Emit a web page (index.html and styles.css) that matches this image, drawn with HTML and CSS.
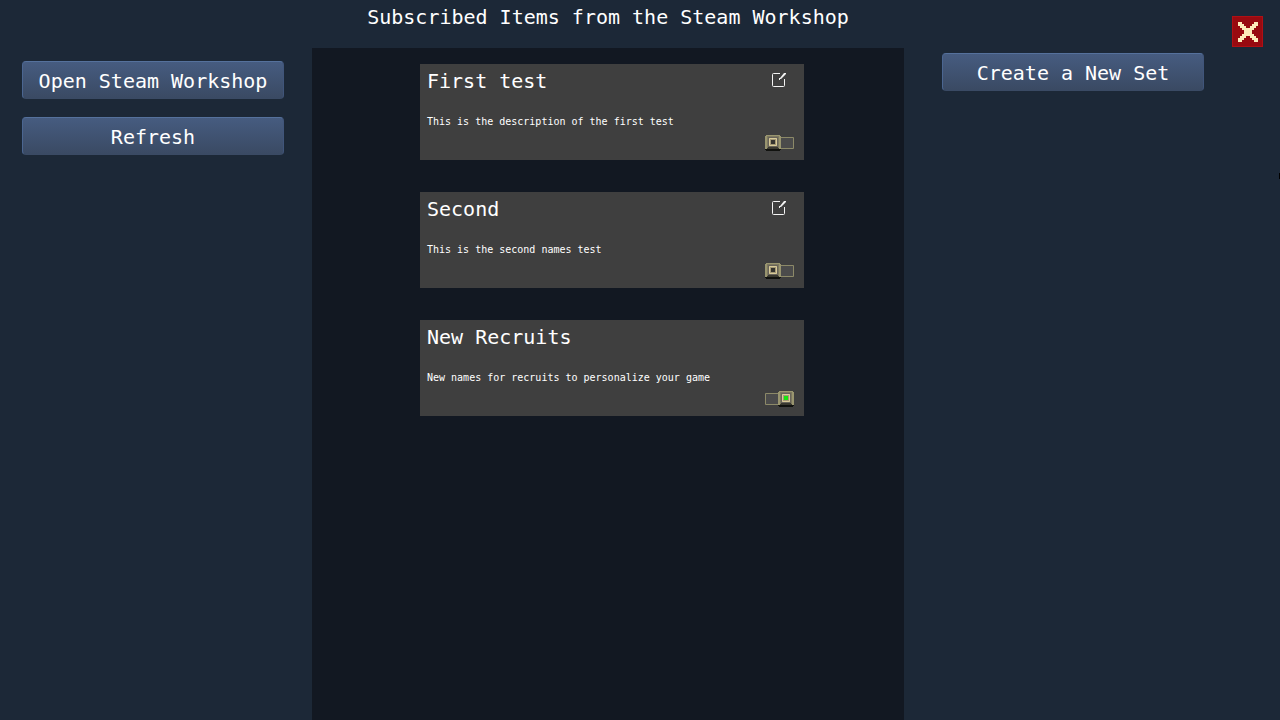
FILE: index.html
```html
<!DOCTYPE html>
<html lang="en">
<head>
<meta charset="utf-8">
<title>Subscribed Items from the Steam Workshop</title>
<link rel="stylesheet" href="styles.css">
</head>
<body>
<svg width="0" height="0" class="defs" aria-hidden="true">
  <symbol id="edit" viewBox="0 0 16 16">
    <path d="M9 1.500H2.500Q1.500 1.500 1.500 2.500V13.500Q1.500 14.500 2.500 14.500H12.500Q13.500 14.500 13.500 13.500V7" fill="none" stroke="#f4f4f4"/>
    <path d="M13 1h2v1l-5 5h-1v1H8V6h1z" fill="#f4f4f4"/>
  </symbol>
  <symbol id="knob" viewBox="0 0 16 16">
    <path d="M0 12h16v3h-1v1H1v-1H0z" fill="#11120f"/>
    <path d="M1 0h14v1h1v13h-2v-1H2v1H0V1h1z" fill="#99956f"/>
    <path d="M2 1h12v12H2z" fill="#7d785f"/>
    <path d="M3 2h10v10H3z" fill="#68645a"/>
    <path d="M4 3h8v8H4z" fill="#a39876"/>
    <path d="M4.500 3.500h7v7h-7z" fill="none" stroke="#d9cb98"/>
    <path d="M3 12h10v1h1v1H2v-1h1z" fill="#39382f"/>
  </symbol>
</svg>
<div class="screen">
  <aside class="side side-left">
    <button class="btn" type="button">Open Steam Workshop</button>
    <button class="btn" type="button">Refresh</button>
  </aside>
  <main class="center">
    <h1 class="title">Subscribed Items from the Steam Workshop</h1>
    <div class="list">
      <article class="card">
        <div class="card-head">
          <h2 class="name">First test</h2>
          <button class="edit" type="button" aria-label="Edit First test"><svg class="edit-icon"><use href="#edit"/></svg></button>
        </div>
        <p class="desc">This is the description of the first test</p>
        <label class="toggle">
          <input class="toggle-input" type="checkbox" aria-label="Enable First test">
          <svg class="toggle-art" viewBox="0 0 30 16"><path d="M15 2.500H28.500V13.500H15" fill="#4b4b4b" stroke="#8c8968"/><use href="#knob" width="16" height="16"/><path d="M6 5h4v4H6z" fill="#35342f"/></svg>
        </label>
      </article>
      <article class="card">
        <div class="card-head">
          <h2 class="name">Second</h2>
          <button class="edit" type="button" aria-label="Edit Second"><svg class="edit-icon"><use href="#edit"/></svg></button>
        </div>
        <p class="desc">This is the second names test</p>
        <label class="toggle">
          <input class="toggle-input" type="checkbox" aria-label="Enable Second">
          <svg class="toggle-art" viewBox="0 0 30 16"><path d="M15 2.500H28.500V13.500H15" fill="#4b4b4b" stroke="#8c8968"/><use href="#knob" width="16" height="16"/><path d="M6 5h4v4H6z" fill="#35342f"/></svg>
        </label>
      </article>
      <article class="card">
        <div class="card-head">
          <h2 class="name">New Recruits</h2>
        </div>
        <p class="desc">New names for recruits to personalize your game</p>
        <label class="toggle">
          <input class="toggle-input" type="checkbox" checked aria-label="Enable New Recruits">
          <svg class="toggle-art" viewBox="0 0 30 16"><path d="M14 2.500H.5V13.500H14" fill="#4b4b4b" stroke="#8c8968"/><use href="#knob" x="13" width="16" height="16"/><path d="M19 5h4v4h-4z" fill="#16e60f"/></svg>
        </label>
      </article>
    </div>
  </main>
  <aside class="side side-right">
    <button class="btn" type="button">Create a New Set</button>
    <button class="close" type="button" aria-label="Close">
      <svg class="close-icon" viewBox="0 0 10 10" shape-rendering="crispEdges"><path d="M0 0h2v1h1v1h1v1h2V2h1V1h1V0h2v2H9v1H8v1H7v2h1v1h1v1h1v2H8V9H7V8H6V7H4v1H3v1H2v1H0V8h1V7h1V6h1V4H2V3H1V2H0z" fill="#fdecba"/></svg>
    </button>
  </aside>
</div>
</body>
</html>
```
FILE: styles.css
```css
* { box-sizing: border-box; }
body {
  margin: 0;
  background: #1c2837;
  color: #fff;
  font-family: "DejaVu Sans Mono", monospace;
}
.defs { position: absolute; }
.screen {
  position: relative;
  display: grid;
  grid-template-columns: 39fr 74fr 47fr;
  min-height: 100vh;
}
.screen::after {
  content: "";
  position: absolute;
  right: 0;
  top: 173px;
  width: 1px;
  height: 6px;
  background: #000;
}
.side { display: flex; }
.side-left {
  flex-direction: column;
  gap: 18px;
  padding: 61px 28px 0 22px;
}
.side-right {
  align-items: flex-start;
  justify-content: space-between;
  gap: 28px;
  padding: 16px 17px 0 38px;
}
.btn {
  height: 38px;
  padding: 2px 0 0;
  border: 1px solid;
  border-color: #55719c #40557a #3a4a64 #4b6691;
  border-radius: 4px;
  background: linear-gradient(#465c80, #3a4a63);
  color: #fff;
  font: 20px/24px "DejaVu Sans Mono", monospace;
  white-space: nowrap;
  cursor: pointer;
}
.side-right .btn {
  flex: 0 1 262px;
  margin-top: 37px;
}
.close {
  display: grid;
  place-items: center;
  width: 31px;
  height: 31px;
  padding: 0;
  border: 1px solid #b00f14;
  background: #980a10;
  cursor: pointer;
}
.close-icon { width: 20px; height: 20px; }
.center {
  display: flex;
  flex-direction: column;
}
.title {
  display: flex;
  justify-content: center;
  height: 48px;
  margin: 0;
  padding-top: 5px;
  font-size: 20px;
  line-height: 24px;
  font-weight: 400;
  white-space: nowrap;
}
.list {
  flex: 1;
  display: flex;
  flex-direction: column;
  align-items: center;
  gap: 32px;
  padding: 16px 0 16px 8px;
  background: #121822;
}
.card {
  display: flex;
  flex-direction: column;
  width: 100%;
  max-width: 384px;
  min-height: 96px;
  padding: 5px 9px 9px 7px;
  background: #3f3f3f;
}
.card-head {
  display: flex;
  justify-content: space-between;
  padding-right: 8px;
}
.name {
  margin: 0;
  font-size: 20px;
  line-height: 24px;
  font-weight: 400;
}
.edit {
  height: 24px;
  padding: 3px 0 5px;
  border: 0;
  background: none;
  cursor: pointer;
}
.edit-icon { display: block; width: 16px; height: 16px; }
.desc {
  margin: 22px 0 5px;
  font-size: 10px;
  line-height: 14px;
}
.toggle {
  position: relative;
  align-self: flex-end;
  width: 30px;
  height: 16px;
  margin-top: auto;
}
.toggle-input {
  position: absolute;
  inset: 0;
  width: 100%;
  height: 100%;
  margin: 0;
  opacity: 0;
  cursor: pointer;
}
.toggle-art { display: block; width: 30px; height: 16px; }
```
